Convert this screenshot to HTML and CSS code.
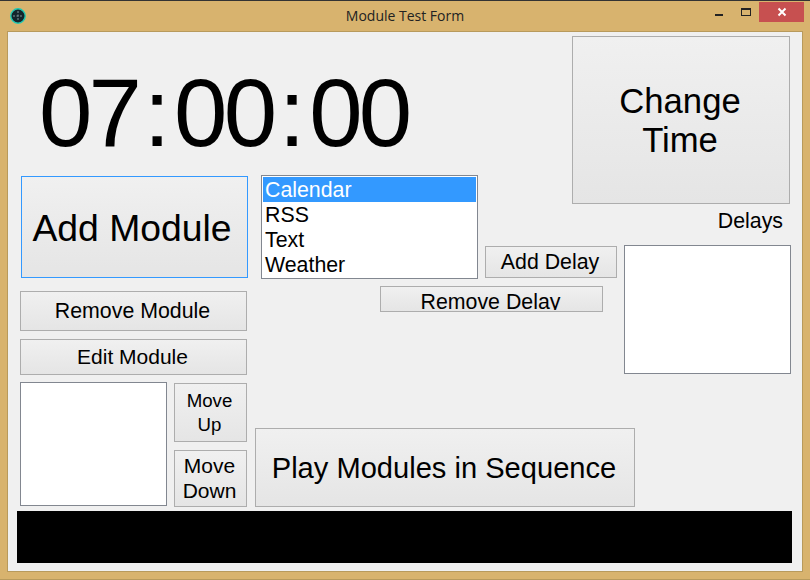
FILE: index.html
```html
<!DOCTYPE html>
<html lang="en">
<head>
  <meta charset="UTF-8" />
  <title>Module Test Form</title>
  <link rel="stylesheet" href="styles.css">
</head>
<body>
  <div class="window">
    <header class="titlebar">
      <svg class="app-icon" width="16" height="16" viewBox="0 0 16 16">
        <circle cx="8" cy="8" r="7.2" fill="#14242c" stroke="#1fc9b4" stroke-width="1.4"/>
        <path d="M8 3v10M3 8h10" stroke="#7f969b" stroke-width="1" stroke-dasharray="2 1.5"/>
      </svg>
      <span class="title">Module Test Form</span>
      <div class="winbtns">
        <span class="win-min"></span>
        <span class="win-max"></span>
        <span class="win-close">
          <svg width="10" height="10" viewBox="0 0 10 10"><path d="M1.5 1.5l7 7M8.5 1.5l-7 7" stroke="#fff" stroke-width="2"/></svg>
        </span>
      </div>
    </header>

    <main class="client">
      <div class="workspace">
        <div class="left-block">
          <div class="clock">07<span class="colon">:</span>00<span class="colon">:</span>00</div>
          <div class="controls">
            <div class="module-col">
              <button class="btn btn-add">Add Module</button>
              <button class="btn btn-remove">Remove Module</button>
              <button class="btn btn-edit">Edit Module</button>
              <div class="order-row">
                <div class="listbox order-list"></div>
                <div class="move-col">
                  <button class="btn btn-up">Move<br>Up</button>
                  <button class="btn btn-down">Move<br>Down</button>
                </div>
              </div>
            </div>
            <div class="mid-col">
              <div class="list-row">
                <ul class="listbox types">
                  <li class="selected">Calendar</li>
                  <li>RSS</li>
                  <li>Text</li>
                  <li>Weather</li>
                </ul>
                <button class="btn btn-delay">Add Delay</button>
              </div>
              <button class="btn btn-remove-delay"><span class="clipped">Remove Delay</span></button>
              <button class="btn btn-play">Play Modules in Sequence</button>
            </div>
          </div>
        </div>
        <div class="right-col">
          <button class="btn btn-time">Change<br>Time</button>
          <label class="delays-label">Delays</label>
          <div class="listbox delays"></div>
        </div>
      </div>
      <div class="status"></div>
    </main>
  </div>
</body>
</html>
```

FILE: styles.css
```css
* { margin: 0; padding: 0; box-sizing: border-box; }
html, body { width: 810px; height: 580px; overflow: hidden; }
body {
  font-family: "Liberation Sans", Arial, sans-serif;
  color: #000;
}
.window {
  width: 810px;
  height: 580px;
  background: #d8b36e;
  border-top: 1px solid #333;
  border-bottom: 1px solid #b89a5c;
  display: flex;
  flex-direction: column;
}
.titlebar {
  height: 30px;
  display: flex;
  align-items: center;
  position: relative;
  padding-left: 10px;
}
.app-icon { margin-top: -1px; }
.title {
  position: absolute;
  left: 0;
  right: 0;
  top: 6px;
  text-align: center;
  font-family: "Open Sans", sans-serif;
  font-size: 14px;
  line-height: 18px;
  color: #222;
}
.winbtns {
  position: absolute;
  top: 1px;
  right: 6px;
  display: flex;
  height: 20px;
}
.win-min {
  width: 8px;
  height: 2px;
  margin-top: 12px;
  background: #222;
}
.win-max {
  width: 10px;
  height: 8px;
  margin: 6px 8px 0 18px;
  border: 1px solid #222;
  border-top-width: 2px;
}
.win-close {
  width: 45px;
  height: 20px;
  background: #c75050;
  display: flex;
  align-items: center;
  justify-content: center;
}

.client {
  width: 796px;
  height: 541px;
  margin-left: 7px;
  background: #f0f0f0;
  border: 1px solid #b89a5c;
  padding-top: 4px;
}
.workspace { display: flex; height: 471px; }
.left-block { width: 552px; margin-left: 12px; flex-shrink: 0; }
.clock {
  height: 139px;
  padding: 22px 0 0 19px;
  font-size: 96px;
  line-height: 110px;
  letter-spacing: -3.8px;
}
.colon { margin: 0 7.5px 0 5.5px; }
.controls { display: flex; }

.btn {
  display: block;
  flex-shrink: 0;
  padding-right: 2px;
  font-family: inherit;
  color: #000;
  border: 1px solid #adadad;
  background: linear-gradient(to bottom, #f0f0f0, #e5e5e5);
  font-size: 21.33px;
  line-height: 25px;
  text-align: center;
  overflow: hidden;
}
.listbox {
  background: #fff;
  border: 1px solid #828790;
  list-style: none;
  flex-shrink: 0;
}

.module-col { width: 228px; flex-shrink: 0; }
.btn-add {
  width: 227px;
  height: 102px;
  margin: 1px 0 0 1px;
  padding: 2px 5px 0 0;
  border-color: #3399ff;
  font-size: 37.33px;
  line-height: 42px;
}
.btn-remove { width: 227px; height: 40px; margin-top: 13px; }
.btn-edit {
  width: 227px;
  height: 36px;
  margin-top: 8px;
  padding-bottom: 2px;
  font-size: 21px;
}
.order-row { display: flex; margin-top: 7px; }
.order-list { width: 147px; height: 124px; }
.move-col { margin-left: 7px; }
.btn-up {
  width: 73px;
  height: 59px;
  margin-top: 1px;
  font-size: 18.67px;
  line-height: 24px;
}
.btn-down {
  width: 73px;
  height: 57px;
  margin-top: 8px;
  padding-bottom: 2px;
  font-size: 21px;
}

.mid-col { margin-left: 7px; flex-shrink: 0; }
.list-row { display: flex; align-items: flex-end; margin-left: 6px; }
.types { width: 217px; height: 104px; padding: 1px; font-size: 21.33px; line-height: 25px; }
.types li { height: 25px; padding: 1px 0 0 2px; }
.types .selected { background: #3399ff; color: #fff; }
.btn-delay { width: 132px; height: 32px; margin: 0 0 1px 7px; }
.btn-remove-delay {
  width: 223px;
  height: 26px;
  margin: 7px 0 0 125px;
}
/* the form is too short for this label, its descender gets cut */
.clipped {
  display: block;
  height: 22px;
  line-height: 29px;
  overflow: hidden;
}
.btn-play {
  width: 380px;
  height: 79px;
  margin-top: 116px;
  font-size: 29.1px;
  line-height: 34px;
}

.right-col {
  width: 219px;
  display: flex;
  flex-direction: column;
  align-items: flex-end;
  flex-shrink: 0;
}
.btn-time {
  width: 218px;
  height: 168px;
  margin-right: 1px;
  padding-top: 2px;
  font-size: 34.67px;
  line-height: 39px;
}
.delays-label {
  width: 167px;
  height: 25px;
  margin-top: 5px;
  padding-right: 8px;
  text-align: right;
  font-size: 21.33px;
  line-height: 25px;
}
.delays { width: 167px; height: 129px; margin-top: 11px; }

.status {
  width: 775px;
  height: 52px;
  margin: 4px 0 0 9px;
  background: #000;
}
```
